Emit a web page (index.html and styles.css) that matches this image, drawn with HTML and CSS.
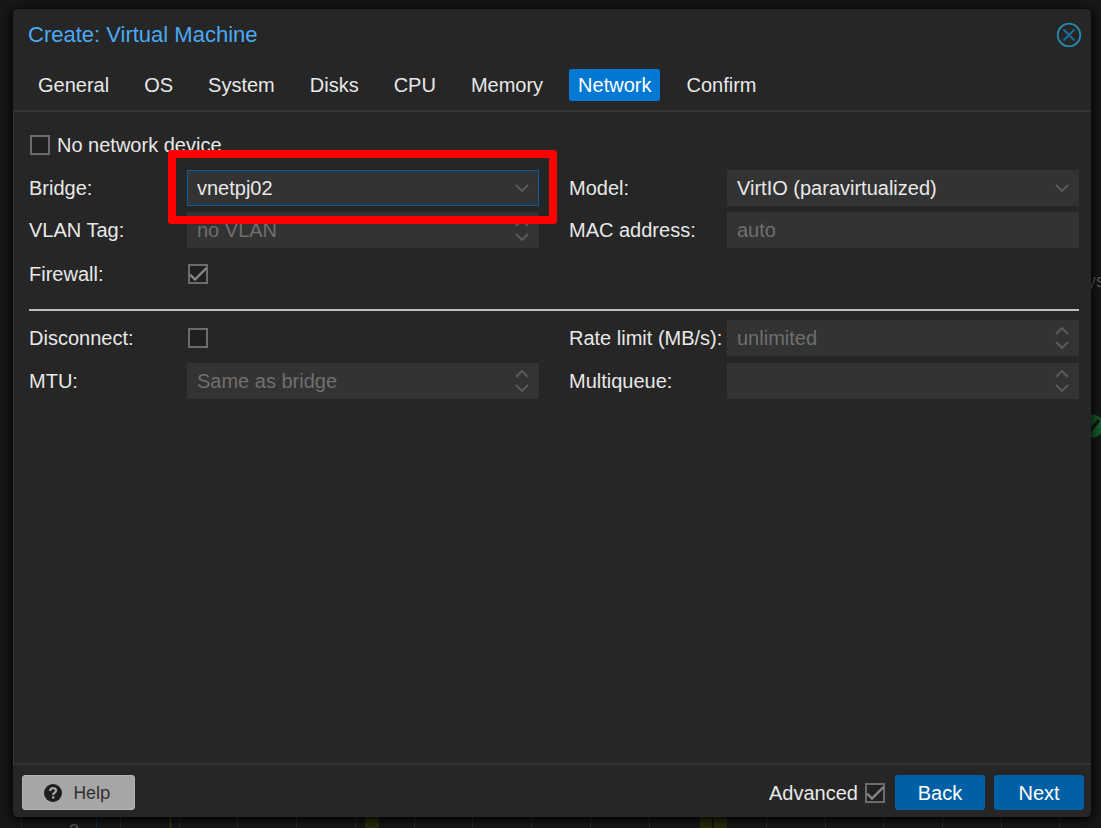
FILE: index.html
```html
<!DOCTYPE html>
<html lang="en">
<head>
<meta charset="utf-8">
<title>Create: Virtual Machine</title>
<link rel="stylesheet" href="styles.css">
</head>
<body>
<svg width="0" height="0" class="defs" aria-hidden="true">
  <symbol id="down" viewBox="0 0 14 8"><path d="M1 1l6 6 6-6" fill="none" stroke="currentColor" stroke-width="2"/></symbol>
  <symbol id="up" viewBox="0 0 14 8"><path d="M1 7l6-6 6 6" fill="none" stroke="currentColor" stroke-width="2"/></symbol>
  <symbol id="tick" viewBox="0 0 20 20"><path d="M2 10.500l5 5L18.500 4" fill="none" stroke="currentColor" stroke-width="2.400"/></symbol>
</svg>

<div class="backdrop" aria-hidden="true">
  <span class="backdrop-label">ys</span>
  <svg class="backdrop-status" viewBox="0 0 24 24"><circle cx="12" cy="12" r="11.500" fill="#17602b"/><path d="M6 13l4 4 9-11" fill="none" stroke="#141414" stroke-width="3"/></svg>
  <span class="backdrop-tick">2</span>
  <svg class="backdrop-chart" width="1101" height="12">
    <path d="M21.500 0v12M120.500 0v12M179.500 0v12M237.500 0v12M296.500 0v12M355.500 0v12M414.500 0v12M472.500 0v12M531.500 0v12M590.500 0v12M649.500 0v12M766.500 0v12M825.500 0v12M883.500 0v12M942.500 0v12M1001.500 0v12M1059.500 0v12" stroke="#292929"/>
    <path d="M96.500 0v12" stroke="#0c3550"/>
    <path d="M170.500 0v12" stroke="#36370f" stroke-width="2"/>
    <path d="M365 0h14v12h-14zM700 0h12v12h-12zM714 0h13v12h-13z" fill="#2b2d0b"/>
  </svg>
</div>

<main class="dialog">
  <header class="titlebar">
    <h1 class="title">Create: Virtual Machine</h1>
    <button class="close" type="button" aria-label="Close">
      <svg viewBox="0 0 26 26"><circle cx="13" cy="13" r="11.300" fill="none" stroke="#2687b0" stroke-width="1.800"/><path d="M7.500 7.500l11 11M18.500 7.500l-11 11" stroke="#1c6f9f" stroke-width="1.800"/></svg>
    </button>
  </header>
  <nav class="tabs">
    <button class="tab" type="button">General</button>
    <button class="tab" type="button">OS</button>
    <button class="tab" type="button">System</button>
    <button class="tab" type="button">Disks</button>
    <button class="tab" type="button">CPU</button>
    <button class="tab" type="button">Memory</button>
    <button class="tab tab-active" type="button">Network</button>
    <button class="tab" type="button">Confirm</button>
  </nav>

  <form class="body">
    <div class="row row-first">
      <span class="check"><input type="checkbox" id="nonet"><svg><use href="#tick"/></svg></span>
      <label for="nonet">No network device</label>
    </div>
    <div class="columns columns-main">
      <div class="row">
        <label class="label" for="bridge">Bridge:</label>
        <span class="field marked">
          <select class="input input-focus" id="bridge"><option>vnetpj02</option></select>
          <svg class="arrow"><use href="#down"/></svg>
        </span>
      </div>
      <div class="row">
        <label class="label" for="model">Model:</label>
        <span class="field">
          <select class="input" id="model"><option>VirtIO (paravirtualized)</option></select>
          <svg class="arrow"><use href="#down"/></svg>
        </span>
      </div>
      <div class="row">
        <label class="label" for="vlan">VLAN Tag:</label>
        <span class="field">
          <input class="input" id="vlan" type="text" placeholder="no VLAN">
          <span class="spinner">
            <button type="button" aria-label="Increase VLAN tag"><svg><use href="#up"/></svg></button>
            <button type="button" aria-label="Decrease VLAN tag"><svg><use href="#down"/></svg></button>
          </span>
        </span>
      </div>
      <div class="row">
        <label class="label" for="mac">MAC address:</label>
        <span class="field"><input class="input" id="mac" type="text" placeholder="auto"></span>
      </div>
      <div class="row row-tall">
        <label class="label" for="firewall">Firewall:</label>
        <span class="check"><input type="checkbox" id="firewall" checked><svg><use href="#tick"/></svg></span>
      </div>
    </div>
    <hr class="rule">
    <div class="columns">
      <div class="row">
        <label class="label" for="disconnect">Disconnect:</label>
        <span class="check"><input type="checkbox" id="disconnect"><svg><use href="#tick"/></svg></span>
      </div>
      <div class="row">
        <label class="label" for="rate">Rate limit (MB/s):</label>
        <span class="field">
          <input class="input" id="rate" type="text" placeholder="unlimited">
          <span class="spinner">
            <button type="button" aria-label="Increase rate limit"><svg><use href="#up"/></svg></button>
            <button type="button" aria-label="Decrease rate limit"><svg><use href="#down"/></svg></button>
          </span>
        </span>
      </div>
      <div class="row">
        <label class="label" for="mtu">MTU:</label>
        <span class="field">
          <input class="input" id="mtu" type="text" placeholder="Same as bridge">
          <span class="spinner">
            <button type="button" aria-label="Increase MTU"><svg><use href="#up"/></svg></button>
            <button type="button" aria-label="Decrease MTU"><svg><use href="#down"/></svg></button>
          </span>
        </span>
      </div>
      <div class="row">
        <label class="label" for="queues">Multiqueue:</label>
        <span class="field">
          <input class="input" id="queues" type="text">
          <span class="spinner">
            <button type="button" aria-label="Increase multiqueue"><svg><use href="#up"/></svg></button>
            <button type="button" aria-label="Decrease multiqueue"><svg><use href="#down"/></svg></button>
          </span>
        </span>
      </div>
    </div>
  </form>

  <footer class="footer">
    <button class="button button-help" type="button">
      <svg viewBox="0 0 18 18"><circle cx="9" cy="9" r="9" fill="#1d1d1d"/><path d="M6 7C6.200 4.900 7.400 4.200 9 4.200c1.800 0 3 1 3 2.500C12 8.700 9.200 8.700 9.200 11" fill="none" stroke="#a6a6a6" stroke-width="2.300"/><path d="M8 12.300h2.400v2.300H8z" fill="#a6a6a6"/></svg>
      Help
    </button>
    <label class="advanced" for="advanced">Advanced</label>
    <span class="check"><input type="checkbox" id="advanced" checked><svg><use href="#tick"/></svg></span>
    <button class="button button-primary button-back" type="button">Back</button>
    <button class="button button-primary" type="button">Next</button>
  </footer>
</main>
</body>
</html>
```
FILE: styles.css
```css
* {
  box-sizing: border-box;
}

body {
  margin: 0;
  min-height: 100vh;
  padding: 9px 10px 11px 13px;
  display: flex;
  overflow: hidden;
  background: #171717;
  color: #e8e8e8;
  font: 20px/24px "Liberation Sans", Arial, sans-serif;
}

button,
input,
select {
  font: inherit;
  color: inherit;
  margin: 0;
}

.defs {
  position: absolute;
}

.backdrop {
  position: absolute;
  inset: 0;
  overflow: hidden;
  color: #5c5c5c;
}

.backdrop-label {
  position: absolute;
  top: 269px;
  right: -4px;
  font-size: 18px;
}

.backdrop-status {
  position: absolute;
  top: 414px;
  right: -3px;
  width: 24px;
  height: 24px;
}

.backdrop-tick {
  position: absolute;
  bottom: -15px;
  left: 69px;
  font-size: 18px;
}

.backdrop-chart {
  position: absolute;
  bottom: 0;
  left: 0;
}

.dialog {
  position: relative;
  flex: 1;
  min-width: 0;
  display: flex;
  flex-direction: column;
  border-radius: 5px;
  background: #262626;
  box-shadow: 0 2px 12px 1px #000000;
}

.titlebar {
  display: flex;
  justify-content: space-between;
  align-items: center;
  height: 52px;
  padding: 0 9px 0 15px;
}

.title {
  margin: 0;
  color: #4aaaf3;
  font-size: 22px;
  font-weight: 400;
}

.close {
  width: 26px;
  height: 26px;
  padding: 0;
  border: 0;
  background: none;
}

.close svg {
  display: block;
}

.tabs {
  display: flex;
  gap: 17px;
  height: 51px;
  padding: 8px 16px;
  border-bottom: 2px solid #333333;
}

.tab {
  height: 32px;
  padding: 0 9px;
  border: 0;
  border-radius: 2px;
  background: none;
}

.tab-active {
  background: #0078d4;
  color: #ffffff;
}

.body {
  flex: 1;
  padding: 15px 12px 15px 15px;
  border-left: 1px solid #383838;
}

.columns {
  display: grid;
  grid-template-columns: 1fr 1fr;
  gap: 7px 30px;
}

.columns-main {
  row-gap: 6px;
}

.row {
  display: flex;
  align-items: center;
  min-height: 36px;
}

.row-first {
  gap: 7px;
  margin-bottom: 7px;
}

.row-tall {
  min-height: 39px;
}

.label {
  width: 158px;
  white-space: nowrap;
}

.field {
  position: relative;
  flex: 1;
  display: flex;
  min-width: 0;
}

.input {
  appearance: none;
  width: 100%;
  height: 36px;
  padding: 0 36px 0 9px;
  border: 1px solid #333333;
  border-radius: 0;
  outline: 0;
  background: #333333;
}

.input::placeholder {
  color: #6f6f6f;
  opacity: 1;
}

.input-focus {
  border-color: #0e5c9c;
}

.marked::after {
  content: "";
  position: absolute;
  inset: -20px -18px -18px -19px;
  border: 8px solid #ff0000;
  border-radius: 3px;
  pointer-events: none;
  z-index: 1;
}

.arrow {
  position: absolute;
  top: 14px;
  right: 10px;
  width: 14px;
  height: 8px;
  color: #5a5a5a;
  pointer-events: none;
}

.spinner {
  position: absolute;
  top: 0;
  right: 10px;
  height: 100%;
  display: flex;
  flex-direction: column;
  justify-content: center;
  gap: 6px;
}

.spinner button {
  padding: 0;
  border: 0;
  background: none;
  color: #5a5a5a;
}

.spinner svg {
  display: block;
  width: 14px;
  height: 8px;
}

.check {
  display: grid;
  width: 20px;
  height: 20px;
  margin-left: 1px;
}

.check input,
.check svg {
  grid-area: 1 / 1;
  width: 20px;
  height: 20px;
}

.check input {
  appearance: none;
  border: 2px solid #6c6c6c;
  background: #202020;
}

.check svg {
  color: #858585;
  visibility: hidden;
  pointer-events: none;
}

.check input:checked + svg {
  visibility: visible;
}

.rule {
  height: 2px;
  margin: 16px 0 9px;
  border: 0;
  background: #bdbdbd;
}

.footer {
  display: flex;
  align-items: center;
  height: 54px;
  padding: 3px 7px 0 9px;
  border-top: 2px solid #333333;
}

.button {
  height: 35px;
  padding: 0;
  border: 0;
  border-radius: 3px;
}

.button-help {
  display: flex;
  align-items: center;
  justify-content: center;
  gap: 11px;
  width: 113px;
  padding-right: 2px;
  border: 1px solid #b4b4b4;
  background: #a6a6a6;
  color: #2c2c2c;
  font-family: Inter, sans-serif;
  font-size: 17px;
}

.button-help svg {
  width: 18px;
  height: 18px;
}

.advanced {
  margin-left: auto;
  margin-right: 6px;
}

.button-primary {
  width: 90px;
  background: #0060a5;
  color: #ffffff;
}

.button-back {
  margin: 0 9px 0 10px;
}
```
